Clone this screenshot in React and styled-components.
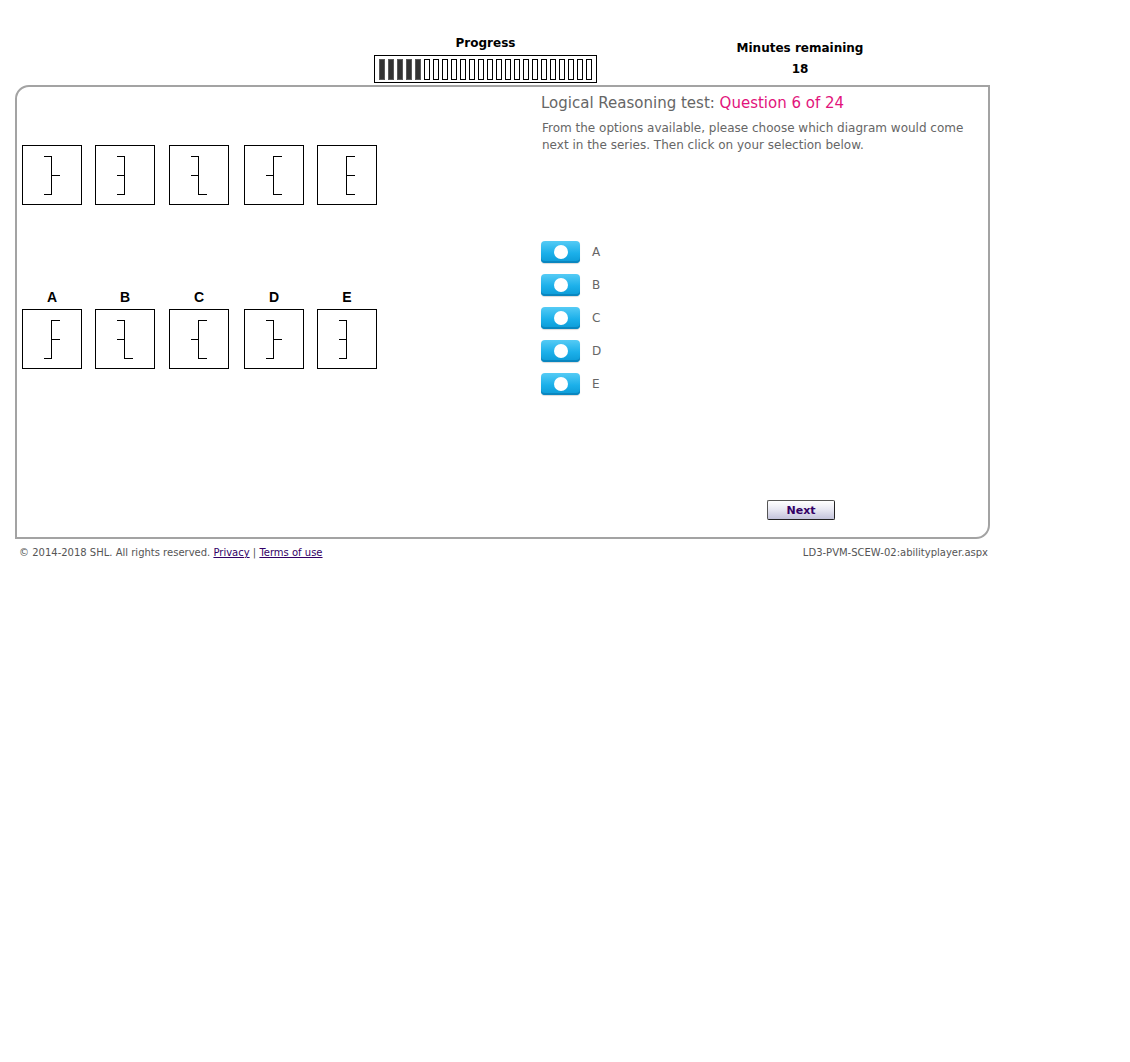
import React from "react";
import styled, { createGlobalStyle } from "styled-components";

const GlobalStyle = createGlobalStyle`
  html, body {
    margin: 0;
    padding: 0;
    background: #fff;
  }
  body {
    font-family: "DejaVu Sans", Verdana, sans-serif;
  }
`;

const Page = styled.div`
  width: 975px;
  margin-left: 15px;
`;

// header with progress and timer
const Header = styled.div`
  display: grid;
  grid-template-columns: 359px 223px 113px 180px;
  height: 85px;
`;

const ProgressBlock = styled.div`
  grid-column: 2;
  display: flex;
  flex-direction: column;
  align-items: center;
  padding-top: 36px;
`;

const TimerBlock = styled.div`
  grid-column: 4;
  display: flex;
  flex-direction: column;
  align-items: center;
  padding-top: 41px;
`;

const HeadLabel = styled.div`
  font-size: 12px;
  font-weight: bold;
  color: #000;
  line-height: 14px;
  height: ${(p) => p.h || 14}px;
`;

const Bar = styled.div`
  box-sizing: border-box;
  width: 223px;
  height: 28px;
  border: 1px solid #000;
  padding: 0 4px;
  display: flex;
  align-items: center;
  gap: 3px;
  margin-top: 5px;
`;

const Segment = styled.div`
  box-sizing: border-box;
  width: 6px;
  height: 21px;
  margin-top: 1px;
  border: 1px solid ${(p) => (p.done ? "#5a5a5a" : "#000")};
  background: ${(p) => (p.done ? "#333" : "#fff")};
`;

const Panel = styled.div`
  box-sizing: border-box;
  height: 454px;
  border: 2px solid #a3a3a3;
  border-radius: 14px 0 14px 0;
  display: grid;
  grid-template-columns: 524px 1fr;
`;

const LeftCol = styled.div`
  padding: 58px 0 0 5px;
`;

const FigureRow = styled.div`
  display: grid;
  grid-template-columns: 73px 74px 75px 73px 60px;
  margin-bottom: ${(p) => p.mb || 0}px;
`;

const Letter = styled.div`
  width: 60px;
  text-align: center;
  font-family: "Liberation Sans", Arial, sans-serif;
  font-weight: bold;
  font-size: 14px;
  line-height: 16px;
  margin-bottom: 4px;
  color: #000;
`;

const Frame = styled.div`
  box-sizing: border-box;
  width: 60px;
  height: 60px;
  border: 1px solid #000;
  background: #fff;
  svg {
    display: block;
  }
`;

const RightCol = styled.div`
  padding-top: 6px;
  display: flex;
  flex-direction: column;
  align-items: flex-start;
`;

const Title = styled.div`
  font-size: 15px;
  line-height: 20px;
  color: #666;
  span {
    color: #e2137b;
  }
`;

const Intro = styled.div`
  margin-top: 7px;
  width: 440px;
  font-size: 12px;
  line-height: 17px;
  color: #666;
  padding-left: 1px;
`;

const Options = styled.div`
  margin-top: 87px;
  display: flex;
  flex-direction: column;
  gap: 11px;
`;

const Option = styled.label`
  display: flex;
  align-items: center;
  gap: 12px;
  font-size: 12px;
  color: #666;
  cursor: pointer;
`;

const Toggle = styled.span`
  box-sizing: border-box;
  width: 39px;
  height: 22px;
  border-radius: 4px;
  background: linear-gradient(#55cbf5, #1cb0ea 55%, #0b9ad6);
  box-shadow: inset 0 -2px 0 #0a86bf, 0 1px 1px rgba(0, 0, 0, 0.15);
  display: flex;
  align-items: center;
  justify-content: center;
  &::after {
    content: "";
    width: 14px;
    height: 14px;
    border-radius: 50%;
    background: #fff;
    margin-top: -1px;
  }
`;

const NextButton = styled.button`
  margin: 105px 0 0 226px;
  box-sizing: border-box;
  width: 68px;
  height: 20px;
  padding: 0;
  border: 1px solid #555;
  border-right-color: #222;
  border-bottom-color: #222;
  border-radius: 2px;
  background: linear-gradient(#ffffff, #e9e9f3 45%, #c3c3db);
  font-family: "DejaVu Sans", Verdana, sans-serif;
  font-weight: bold;
  font-size: 11px;
  color: #330066;
  cursor: pointer;
`;

const Footer = styled.div`
  display: flex;
  justify-content: space-between;
  padding: 8px 2px 0 4px;
  font-size: 10px;
  line-height: 12px;
  color: #555;
  a {
    color: #330066;
    text-decoration: underline;
  }
`;

// each figure: vertical stroke with a top arm, a middle tick and a bottom arm
// "l" points left, "r" points right
const Diagram = ({ top, mid, bottom }) => {
  const x = 28.5;
  const arm = (y, dir) => (
    <line x1={x} y1={y} x2={dir === "l" ? x - 8 : x + 8} y2={y} />
  );
  return (
    <Frame>
      <svg width="58" height="58" viewBox="0 0 58 58">
        <g stroke="#000" strokeWidth="1" shapeRendering="crispEdges">
          <line x1={x} y1={10} x2={x} y2={49} />
          {arm(10.5, top)}
          {arm(29.5, mid)}
          {arm(48.5, bottom)}
        </g>
      </svg>
    </Frame>
  );
};

const series = [
  ["l", "r", "l"],
  ["l", "l", "l"],
  ["l", "l", "r"],
  ["r", "l", "r"],
  ["r", "r", "r"],
];

const answers = [
  ["A", "r", "r", "l"],
  ["B", "l", "l", "r"],
  ["C", "r", "l", "r"],
  ["D", "l", "r", "l"],
  ["E", "l", "l", "l"],
];

const TOTAL = 24;
const DONE = 5;

export default function App() {
  return (
    <>
      <GlobalStyle />
      <Page>
        <Header>
          <ProgressBlock>
            <HeadLabel>Progress</HeadLabel>
            <Bar>
              {Array.from({ length: TOTAL }, (_, i) => (
                <Segment key={i} done={i < DONE} />
              ))}
            </Bar>
          </ProgressBlock>
          <TimerBlock>
            <HeadLabel h={21}>Minutes remaining</HeadLabel>
            <HeadLabel>18</HeadLabel>
          </TimerBlock>
        </Header>

        <Panel>
          <LeftCol>
            <FigureRow mb={84}>
              {series.map(([t, m, b], i) => (
                <Diagram key={i} top={t} mid={m} bottom={b} />
              ))}
            </FigureRow>
            <FigureRow>
              {answers.map(([l, t, m, b]) => (
                <div key={l}>
                  <Letter>{l}</Letter>
                  <Diagram top={t} mid={m} bottom={b} />
                </div>
              ))}
            </FigureRow>
          </LeftCol>

          <RightCol>
            <Title>
              Logical Reasoning test: <span>Question 6 of 24</span>
            </Title>
            <Intro>
              From the options available, please choose which diagram would come
              next in the series. Then click on your selection below.
            </Intro>
            <Options>
              {answers.map(([l]) => (
                <Option key={l}>
                  <Toggle />
                  {l}
                </Option>
              ))}
            </Options>
            <NextButton>Next</NextButton>
          </RightCol>
        </Panel>

        <Footer>
          <span>
            © 2014-2018 SHL. All rights reserved. <a href="#">Privacy</a> | <a href="#">Terms of use</a>
          </span>
          <span>LD3-PVM-SCEW-02:abilityplayer.aspx</span>
        </Footer>
      </Page>
    </>
  );
}
